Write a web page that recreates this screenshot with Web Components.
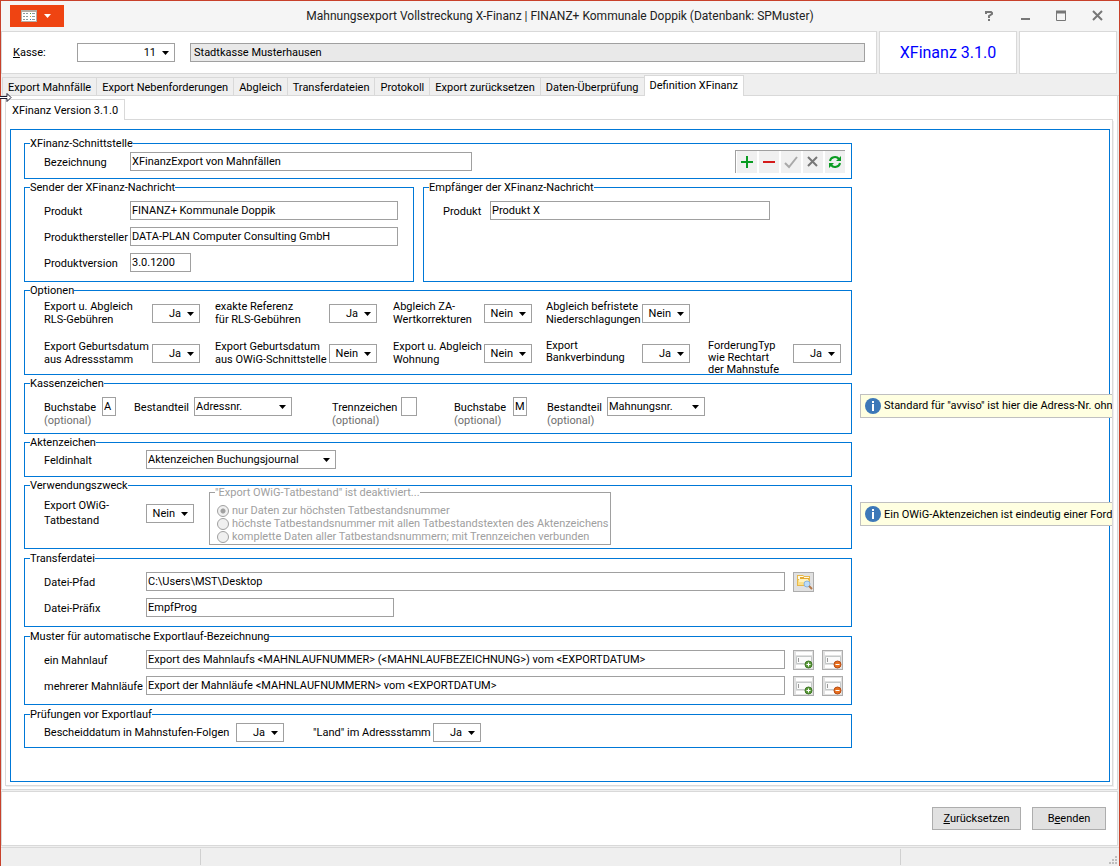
<!DOCTYPE html>
<html lang="de">

<head>
    <meta charset="utf-8">
    <meta name="viewport" content="width=device-width, initial-scale=1">
    <title>Mahnungsexport Vollstreckung X-Finanz</title>
    <style>
        :root {
            --line: #d9d9d9;
            --field-line: #a0a0a0;
            --face: #efefef;
            --accent: #0078d7;
            --frame: #c8412b;
        }

        body {
            margin: 0;
            background: var(--face);
            color: #000;
            font: 11px/13px Roboto, "Liberation Sans", sans-serif;
        }
    </style>
</head>

<body>
    <xf-window></xf-window>

    <template id="window-template">
        <style>
            :host {
                display: flex;
                flex-direction: column;
                box-sizing: border-box;
                min-height: 100vh;
                border: 1px solid var(--frame);
                border-bottom: 0;
                overflow: hidden;
            }

            header {
                display: grid;
                grid-template-columns: 1fr 138px 98px;
                gap: 2px;
                padding-right: 2px;
            }

            header > div,
            footer {
                box-sizing: border-box;
                border: 1px solid var(--line);
                background: #fff;
            }

            .kasse {
                display: flex;
                gap: 15px;
                padding: 11px;
                height: 43px;
            }

            .kasse .name {
                flex: 1;
                --fill: #e9e9e9;
            }

            .version {
                display: flex;
                align-items: center;
                justify-content: center;
                color: #00f;
                font-size: 16px;
            }

            .page {
                flex: 1;
                display: flex;
                flex-direction: column;
                box-sizing: border-box;
                margin-right: 1px;
                padding: 3px 3px 3px 3px;
                border: 1px solid var(--line);
                border-top: 0;
                background: #fff;
            }

            .sheet {
                flex: 1;
                display: flex;
                flex-direction: column;
                margin-right: 1px;
                padding: 9px 2px 3px 4px;
                border: 1px solid var(--line);
                border-top: 0;
                box-shadow: 1px 1px 0 #efefef;
                overflow: hidden;
            }

            footer {
                display: flex;
                justify-content: flex-end;
                align-items: center;
                gap: 11px;
                height: 55px;
                margin: 1px 1px 1px 0;
                padding-right: 11px;
            }
        </style>
        <title-bar>Mahnungsexport Vollstreckung X-Finanz | FINANZ+ Kommunale Doppik (Datenbank: SPMuster)</title-bar>
        <header>
            <div class="kasse">
                <choice-field options="11" value="11" style="--label: 64px; --width: 98px"><u>K</u>asse:</choice-field>
                <text-field class="name" name="Kassenname" value="Stadtkasse Musterhausen" readonly></text-field>
            </div>
            <div class="version">XFinanz 3.1.0</div>
            <div></div>
        </header>
        <tab-strip selected="7"
            tabs="Export Mahnfälle|Export Nebenforderungen|Abgleich|Transferdateien|Protokoll|Export zurücksetzen|Daten-Überprüfung|Definition XFinanz"></tab-strip>
        <div class="page">
            <tab-strip class="inner" selected="0" tabs="XFinanz Version 3.1.0"></tab-strip>
            <div class="sheet">
                <definition-form></definition-form>
            </div>
        </div>
        <footer>
            <push-button style="--width: 89px"><u>Z</u>urücksetzen</push-button>
            <push-button style="--width: 74px">B<u>e</u>enden</push-button>
        </footer>
        <status-bar></status-bar>
        <resize-pointer></resize-pointer>
    </template>

    <template id="form-template">
        <style>
            :host {
                flex: 1;
                display: grid;
                grid-template-columns: minmax(0, 828px) minmax(0, 1fr);
                align-content: start;
                gap: 2px 8px;
                padding: 7px 0 0 13px;
                border: 1px solid var(--accent);
            }

            group-box,
            .pair {
                grid-column: 1;
            }

            hint-label {
                grid-column: 2;
                align-self: center;
                margin-right: -3px;
            }

            .row {
                display: flex;
            }

            .name {
                justify-content: space-between;
                height: 28px;
                padding: 0 6px 0 19px;
            }

            .name text-field {
                margin-top: 2px;
            }

            .pair {
                display: grid;
                grid-template-columns: 390px 1fr;
                gap: 9px;
            }

            .pair group-box {
                grid-column: auto;
            }

            .fields {
                display: flex;
                flex-direction: column;
                gap: 7px;
                padding: 7px 8px 9px 19px;
            }

            .fields .row {
                gap: 8px;
            }

            .fields .row text-field {
                flex: 1;
            }

            .fields .files {
                padding-right: 29px;
            }

            .options {
                display: grid;
                grid-template-columns: 171px 178px 153px 162px 133px;
                grid-auto-rows: 26px;
                row-gap: 14px;
                align-content: start;
                padding: 3px 0 0 19px;
                height: 74px;
            }

            .three {
                line-height: 12px;
                height: 26px;
                align-items: flex-start;
                --align: flex-start;
                --drop: 4px;
            }

            .key {
                display: grid;
                grid-template-columns: 90px 198px 122px 93px 158px;
                height: 36px;
                padding: 7px 0 0 19px;
            }

            .key small {
                display: block;
                font-size: 11px;
                color: #6e6e6e;
            }

            .record {
                height: 26px;
                padding: 1px 0 0 19px;
            }

            .purpose {
                height: 56px;
                padding-left: 19px;
            }

            .purpose choice-field {
                line-height: 15px;
                height: 30px;
                margin-top: 6px;
            }

            .purpose group-box {
                --accent: #a0a0a0;
                color: #a0a0a0;
                margin: -6px 0 3px 15px;
                width: 402px;
            }

            .later {
                margin-top: 1px;
            }

            .checks {
                gap: 29px;
                height: 19px;
                padding: 2px 0 5px 19px;
            }
        </style>
        <group-box heading="XFinanz-Schnittstelle">
            <div class="row name">
                <text-field value="XFinanzExport von Mahnfällen" style="--label: 86px; --width: 342px">Bezeichnung</text-field>
                <record-toolbar></record-toolbar>
            </div>
        </group-box>
        <div class="pair">
            <group-box heading="Sender der XFinanz-Nachricht">
                <div class="fields" style="--label: 86px; --width: 268px">
                    <text-field value="FINANZ+ Kommunale Doppik">Produkt</text-field>
                    <text-field value="DATA-PLAN Computer Consulting GmbH">Produkthersteller</text-field>
                    <text-field value="3.0.1200" style="--width: 61px">Produktversion</text-field>
                </div>
            </group-box>
            <group-box heading="Empfänger der XFinanz-Nachricht">
                <div class="fields" style="--label: 47px; --width: 280px">
                    <text-field value="Produkt X">Produkt</text-field>
                </div>
            </group-box>
        </div>
        <group-box heading="Optionen">
            <div class="options">
                <choice-field value="Ja" style="--label: 108px">Export u. Abgleich<br>RLS-Gebühren</choice-field>
                <choice-field value="Ja" style="--label: 114px">exakte Referenz<br>für RLS-Gebühren</choice-field>
                <choice-field value="Nein" style="--label: 91px">Abgleich ZA-<br>Wertkorrekturen</choice-field>
                <choice-field value="Nein" style="--label: 96px; grid-column: span 2">Abgleich befristete<br>Niederschlagungen</choice-field>
                <choice-field value="Ja" style="--label: 108px">Export Geburtsdatum<br>aus Adressstamm</choice-field>
                <choice-field value="Nein" style="--label: 114px">Export Geburtsdatum<br>aus OWiG-Schnittstelle</choice-field>
                <choice-field value="Nein" style="--label: 91px">Export u. Abgleich<br>Wohnung</choice-field>
                <choice-field class="three" value="Ja" style="--label: 96px">Export<br>Bankverbindung</choice-field>
                <choice-field class="three" value="Ja" style="--label: 85px">ForderungTyp<br>wie Rechtart<br>der Mahnstufe</choice-field>
            </div>
        </group-box>
        <group-box heading="Kassenzeichen">
            <div class="key">
                <text-field value="A" style="--label: 58px; --width: 14px">Buchstabe<small>(optional)</small></text-field>
                <choice-field align="left" options="Adressnr.|Mahnungsnr." value="Adressnr." style="--label: 60px; --width: 98px">Bestandteil</choice-field>
                <text-field value="" style="--label: 69px; --width: 16px">Trennzeichen<small>(optional)</small></text-field>
                <text-field value="M" style="--label: 59px; --width: 14px">Buchstabe<small>(optional)</small></text-field>
                <choice-field align="left" options="Adressnr.|Mahnungsnr." value="Mahnungsnr." style="--label: 60px; --width: 98px">Bestandteil<small>(optional)</small></choice-field>
            </div>
        </group-box>
        <hint-label>Standard für "avviso" ist hier die Adress-Nr. ohne</hint-label>
        <group-box heading="Aktenzeichen">
            <div class="row record">
                <choice-field align="left" options="Aktenzeichen Buchungsjournal" value="Aktenzeichen Buchungsjournal" style="--label: 102px; --width: 190px">Feldinhalt</choice-field>
            </div>
        </group-box>
        <group-box heading="Verwendungszweck">
            <div class="row purpose">
                <choice-field value="Nein" style="--label: 102px">Export OWiG-<br>Tatbestand</choice-field>
                <group-box heading='"Export OWiG-Tatbestand" ist deaktiviert...'>
                    <radio-list selected="0"
                        items="nur Daten zur höchsten Tatbestandsnummer|höchste Tatbestandsnummer mit allen Tatbestandstexten des Aktenzeichens|komplette Daten aller Tatbestandsnummern; mit Trennzeichen verbunden"></radio-list>
                </group-box>
            </div>
        </group-box>
        <hint-label>Ein OWiG-Aktenzeichen ist eindeutig einer Forderung</hint-label>
        <group-box class="later" heading="Transferdatei">
            <div class="fields" style="--label: 102px">
                <div class="row files">
                    <text-field value="C:\Users\MST\Desktop">Datei-Pfad</text-field>
                    <icon-button icon="folder" label="Ordner wählen"></icon-button>
                </div>
                <text-field value="EmpfProg" style="--width: 248px">Datei-Präfix</text-field>
            </div>
        </group-box>
        <group-box class="later" heading="Muster für automatische Exportlauf-Bezeichnung">
            <div class="fields" style="--label: 102px">
                <div class="row">
                    <text-field value="Export des Mahnlaufs &lt;MAHNLAUFNUMMER&gt; (&lt;MAHNLAUFBEZEICHNUNG&gt;) vom &lt;EXPORTDATUM&gt;">ein Mahnlauf</text-field>
                    <icon-button icon="add" label="Platzhalter einfügen"></icon-button>
                    <icon-button icon="remove" label="Platzhalter entfernen"></icon-button>
                </div>
                <div class="row">
                    <text-field value="Export der Mahnläufe &lt;MAHNLAUFNUMMERN&gt; vom &lt;EXPORTDATUM&gt;">mehrerer Mahnläufe</text-field>
                    <icon-button icon="add" label="Platzhalter einfügen"></icon-button>
                    <icon-button icon="remove" label="Platzhalter entfernen"></icon-button>
                </div>
            </div>
        </group-box>
        <group-box class="later" heading="Prüfungen vor Exportlauf">
            <div class="row checks">
                <choice-field value="Ja" style="--label: 192px">Bescheiddatum in Mahnstufen-Folgen</choice-field>
                <choice-field value="Ja" style="--label: 120px">"Land" im Adressstamm</choice-field>
            </div>
        </group-box>
    </template>

    <script>
        class TitleBar extends HTMLElement {
            constructor() {
                super();
                this.attachShadow({ mode: 'open' });
                this.shadowRoot.innerHTML = `
                <style>
                    :host {
                        display: grid;
                        grid-template-columns: 180px 1fr 180px;
                        align-items: center;
                        height: 30px;
                        background: #f5f5f5;
                        font-size: 12px;
                        line-height: 16px;
                        color: #222;
                    }
                    button {
                        padding: 0;
                        border: 0;
                        background: none;
                    }
                    svg { display: block; }
                    .menu {
                        width: 54px;
                        height: 22px;
                        margin-left: 9px;
                        background: #ef4412;
                    }
                    .title {
                        text-align: center;
                        white-space: nowrap;
                    }
                    .controls {
                        display: flex;
                        justify-content: flex-end;
                        padding-right: 4px;
                    }
                    .controls button { width: 36px; }
                    .controls svg { margin: 0 auto; }
                </style>
                <button class="menu" aria-label="Menü">
                    <svg width="54" height="22">
                        <path d="M11 5h16v12h-16z" fill="#b5aca3"/>
                        <path d="M12 7h14v9h-14z" fill="#fff"/>
                        <path d="M13 8.500h2m1 0h2M13 11.500h2m1 0h2M13 14.500h2m1 0h2M22 8.500h3M22 11.500h3M22 14.500h3" stroke="#8d9ba0"/>
                        <path d="M20 8.500h1" stroke="#4a9a3c"/><path d="M20 11.500h1" stroke="#e0a020"/><path d="M20 14.500h1" stroke="#3b78c0"/>
                        <path d="M34 9h7l-3.500 4z" fill="#fff"/>
                    </svg>
                </button>
                <div class="title"><slot></slot></div>
                <div class="controls">
                    <button aria-label="Hilfe"><svg width="12" height="12" fill="none" stroke="#777" stroke-width="2"><path d="M3 4V2h5l1 1v1L6 6v2M6 9v2"/></svg></button>
                    <button aria-label="Minimieren"><svg width="12" height="12" fill="none" stroke="#777" stroke-width="2"><path d="M2 9h9"/></svg></button>
                    <button aria-label="Maximieren"><svg width="12" height="12" fill="none" stroke="#777"><path d="M1.500 1.500h9v9h-9z"/><path d="M1 2h10" stroke-width="3"/></svg></button>
                    <button aria-label="Schließen"><svg width="12" height="12" fill="none" stroke="#777" stroke-width="2"><path d="M2 1l9 9M11 1l-9 9"/></svg></button>
                </div>`;
            }
        }

        class TabStrip extends HTMLElement {
            connectedCallback() {
                const selected = Number(this.getAttribute('selected'));
                const tabs = this.getAttribute('tabs').split('|');
                this.attachShadow({ mode: 'open' });
                this.shadowRoot.innerHTML = `
                <style>
                    :host {
                        display: flex;
                        align-items: flex-end;
                        height: 22px;
                        padding-left: 1px;
                        box-shadow: inset 0 -1px var(--line);
                    }
                    :host(.inner) {
                        height: 21px;
                        padding-left: 0;
                        margin-right: 1px;
                    }
                    button {
                        height: 19px;
                        padding: 1px 5px 0;
                        border: 1px solid var(--line);
                        border-right: 0;
                        background: none;
                        font: inherit;
                        color: inherit;
                        white-space: nowrap;
                    }
                    button[aria-selected=true] {
                        height: 21px;
                        padding: 0 5px 2px;
                        border: 1px solid var(--line);
                        border-bottom: 0;
                        background: #fff;
                    }
                    :host(.inner) button { padding: 0 6px; }
                </style>
                ${tabs.map((tab, i) => `<button role="tab" aria-selected="${i === selected}">${tab}</button>`).join('')}`;
            }
        }

        class GroupBox extends HTMLElement {
            connectedCallback() {
                this.attachShadow({ mode: 'open' });
                this.shadowRoot.innerHTML = `
                <style>
                    :host { display: block; }
                    fieldset {
                        box-sizing: border-box;
                        min-width: 0;
                        height: 100%;
                        margin: 0;
                        padding: 0;
                        border: 1px solid var(--accent);
                    }
                    legend {
                        margin-left: 5px;
                        padding: 0;
                    }
                </style>
                <fieldset>
                    <legend></legend>
                    <slot></slot>
                </fieldset>`;
                this.shadowRoot.querySelector('legend').textContent = this.getAttribute('heading');
            }
        }

        class TextField extends HTMLElement {
            connectedCallback() {
                this.attachShadow({ mode: 'open' });
                this.shadowRoot.innerHTML = `
                <style>
                    :host { display: flex; }
                    label {
                        flex: none;
                        width: var(--label);
                        padding-top: 4px;
                        white-space: nowrap;
                    }
                    input {
                        box-sizing: border-box;
                        flex: 0 1 var(--width, 100%);
                        min-width: 0;
                        width: var(--width, 100%);
                        height: 19px;
                        padding: 0 1px;
                        border: 1px solid var(--field-line);
                        border-radius: 0;
                        background: var(--fill, #fff);
                        font: inherit;
                        color: inherit;
                    }
                    :host([name]) input { padding-left: 3px; }
                    :host([name]) label { display: none; }
                </style>
                <label for="control"><slot></slot></label>
                <input id="control" type="text">`;
                const input = this.shadowRoot.querySelector('input');
                input.value = this.getAttribute('value');
                input.readOnly = this.hasAttribute('readonly');
                if (this.hasAttribute('name')) input.setAttribute('aria-label', this.getAttribute('name'));
            }
        }

        class ChoiceField extends HTMLElement {
            connectedCallback() {
                const options = (this.getAttribute('options') || 'Ja|Nein').split('|');
                const value = this.getAttribute('value');
                const left = this.getAttribute('align') === 'left';
                this.attachShadow({ mode: 'open' });
                this.shadowRoot.innerHTML = `
                <style>
                    :host {
                        display: flex;
                        align-items: ${left ? 'flex-start' : 'center'};
                    }
                    label {
                        flex: none;
                        width: var(--label);
                        padding-top: ${left ? '4px' : '0'};
                        white-space: nowrap;
                    }
                    .box {
                        position: relative;
                        width: var(--width, 48px);
                        height: 19px;
                        margin-top: var(--drop, 0);
                    }
                    select {
                        appearance: none;
                        display: block;
                        box-sizing: border-box;
                        width: 100%;
                        height: 19px;
                        padding: 0 18px 0 1px;
                        border: 1px solid var(--field-line);
                        border-radius: 0;
                        background: #fff;
                        font: inherit;
                        line-height: 13px;
                        color: inherit;
                        text-align: ${left ? 'left' : 'right'};
                        text-align-last: ${left ? 'left' : 'right'};
                    }
                    svg {
                        position: absolute;
                        right: 6px;
                        top: 8px;
                        pointer-events: none;
                    }
                </style>
                <label for="control"><slot></slot></label>
                <span class="box">
                    <select id="control">${options.map(o => `<option${o === value ? ' selected' : ''}>${o}</option>`).join('')}</select>
                    <svg width="7" height="4"><path d="M0 0h7L3.500 4z"/></svg>
                </span>`;
            }
        }

        class RadioList extends HTMLElement {
            connectedCallback() {
                const items = this.getAttribute('items').split('|');
                const selected = Number(this.getAttribute('selected'));
                this.attachShadow({ mode: 'open' });
                this.shadowRoot.innerHTML = `
                <style>
                    :host {
                        display: block;
                        padding: 5px 0 1px 7px;
                    }
                    div {
                        display: flex;
                        align-items: center;
                        gap: 3px;
                        height: 13px;
                        white-space: nowrap;
                    }
                    input {
                        appearance: none;
                        box-sizing: border-box;
                        flex: none;
                        width: 12px;
                        height: 12px;
                        margin: 0;
                        border: 1px solid #a0a0a0;
                        border-radius: 50%;
                        background: #f0f0f0;
                    }
                    input:checked {
                        background: radial-gradient(circle, #a0a0a0 2px, #f0f0f0 3px);
                    }
                </style>
                ${items.map((item, i) => `<div><input type="radio" name="r" id="r${i}" disabled${i === selected ? ' checked' : ''}><label for="r${i}">${item}</label></div>`).join('')}`;
            }
        }

        class RecordToolbar extends HTMLElement {
            constructor() {
                super();
                this.attachShadow({ mode: 'open' });
                this.shadowRoot.innerHTML = `
                <style>
                    :host {
                        display: flex;
                        gap: 2px;
                        height: 22px;
                        padding: 0 0 0 1px;
                        border: 1px solid #a0a0a0;
                        border-width: 1px 0 0 1px;
                    }
                    button {
                        width: 20px;
                        padding: 0;
                        border: 0;
                        background: #f0f0f0;
                    }
                    svg {
                        display: block;
                        margin: 0 auto;
                        fill: none;
                    }
                </style>
                <button aria-label="Hinzufügen"><svg width="14" height="14" stroke="#0a9c22" stroke-width="2"><path d="M7 1v12M1 7h12"/></svg></button>
                <button aria-label="Löschen"><svg width="14" height="14" stroke="#d41a1a" stroke-width="2"><path d="M1 7h12"/></svg></button>
                <button aria-label="Speichern"><svg width="14" height="14" stroke="#a9a9a9" stroke-width="2"><path d="M1 8l4 4l8-10"/></svg></button>
                <button aria-label="Abbrechen"><svg width="14" height="14" stroke="#777" stroke-width="2"><path d="M2 2l9 9M11 2l-9 9"/></svg></button>
                <button aria-label="Aktualisieren"><svg width="14" height="14" stroke="#0a9c22" stroke-width="2">
                    <path d="M2 6a5 4.500 0 0 1 9-2M12 8a5 4.500 0 0 1-9 2"/>
                    <path d="M13 1v5H8zM1 13V8h5z" fill="#0a9c22" stroke="none"/></svg></button>`;
            }
        }

        const icons = {
            folder: `<path d="M3 2h6l1 1h6v10h-13z" fill="#e8b84a"/><path d="M4 3h5l1 1h5v2h-11z" fill="#fffbe8"/>
                <path d="M6 4h4v1h5v1h-9z" fill="#e3a935"/><path d="M4 7h11v5h-11z" fill="#fbe08a"/><path d="M5 6h9v3h-9z" fill="#fff3c0"/>
                <circle cx="13" cy="11" r="3" fill="#bcdcf8" stroke="#8ab4dc"/><path d="M15 13l3 3" stroke="#b5794b" stroke-width="2"/>`,
            field: `<path d="M2 1h16v3h-16zM2 6h16v6h-16zM2 14h16v3h-16z" fill="#fff"/>
                <path d="M2.500 5.500h15v7h-15z" fill="#fafafa" stroke="#c4c8c8"/><path d="M4.500 7v4" stroke="#999"/>`,
            add: `<circle cx="14.500" cy="13.500" r="3.500" fill="#5c9c3a" stroke="#3c7424"/><path d="M12.500 13.500h4M14.500 11.500v4" stroke="#fff"/>`,
            remove: `<circle cx="14.500" cy="13.500" r="3.500" fill="#e8701e" stroke="#b44a14"/><path d="M12.500 13.500h4" stroke="#fff"/>`
        };

        class IconButton extends HTMLElement {
            connectedCallback() {
                const icon = this.getAttribute('icon');
                this.attachShadow({ mode: 'open' });
                this.shadowRoot.innerHTML = `
                <style>
                    :host {
                        display: block;
                        height: 19px;
                    }
                    button {
                        display: block;
                        box-sizing: border-box;
                        width: 21px;
                        height: 20px;
                        padding: 0;
                        border: 1px solid #adadad;
                        background: #e1e1e1;
                    }
                    svg { display: block; }
                </style>
                <button aria-label="${this.getAttribute('label')}">
                    <svg width="19" height="18" fill="none">${icon === 'folder' ? '' : icons.field}${icons[icon]}</svg>
                </button>`;
            }
        }

        class HintLabel extends HTMLElement {
            constructor() {
                super();
                this.attachShadow({ mode: 'open' });
                this.shadowRoot.innerHTML = `
                <style>
                    :host {
                        display: flex;
                        align-items: center;
                        gap: 3px;
                        box-sizing: border-box;
                        height: 24px;
                        padding-left: 4px;
                        border: 1px solid #c0c0c0;
                        border-right: 0;
                        background: #ffffe1;
                        white-space: nowrap;
                        overflow: hidden;
                        z-index: 1;
                    }
                    svg { flex: none; }
                </style>
                <svg width="16" height="16"><circle cx="8" cy="8" r="8" fill="#3d78b8"/><path d="M7 3h2v2H7zM7 6h2v7H7z" fill="#fff"/></svg>
                <span><slot></slot></span>`;
            }
        }

        class PushButton extends HTMLElement {
            constructor() {
                super();
                this.attachShadow({ mode: 'open' });
                this.shadowRoot.innerHTML = `
                <style>
                    :host { display: block; }
                    button {
                        box-sizing: border-box;
                        display: block;
                        width: var(--width);
                        height: 23px;
                        padding: 0;
                        border: 1px solid #adadad;
                        background: #e1e1e1;
                        font: inherit;
                        color: inherit;
                    }
                </style>
                <button><slot></slot></button>`;
            }
        }

        class StatusBar extends HTMLElement {
            constructor() {
                super();
                this.attachShadow({ mode: 'open' });
                this.shadowRoot.innerHTML = `
                <style>
                    :host {
                        display: grid;
                        grid-template-columns: 199px 1fr 219px;
                        height: 16px;
                        padding: 1px 0;
                        border-top: 1px solid var(--line);
                    }
                    div + div { border-left: 1px solid #d0d0d0; }
                    .grip {
                        display: flex;
                        justify-content: flex-end;
                        align-items: flex-end;
                    }
                </style>
                <div></div>
                <div></div>
                <div class="grip">
                    <svg width="10" height="9" fill="#bfbfbf"><path d="M6 0h2v2H6zM3 3h2v2H3zM6 3h2v2H6zM0 6h2v2H0zM3 6h2v2H3zM6 6h2v2H6z"/></svg>
                </div>`;
            }
        }

        // horizontal resize arrow resting on the left window edge
        class ResizePointer extends HTMLElement {
            constructor() {
                super();
                this.attachShadow({ mode: 'open' });
                this.shadowRoot.innerHTML = `
                <style>
                    :host {
                        position: absolute;
                        left: 0;
                        top: 92px;
                        pointer-events: none;
                    }
                    svg { display: block; }
                </style>
                <svg width="13" height="11"><path d="M0 4.500h7v-3l4 4l-4 4v-3H0" fill="#fff" stroke="#1c1c30"/></svg>`;
            }
        }

        class DefinitionForm extends HTMLElement {
            constructor() {
                super();
                this.attachShadow({ mode: 'open' });
                this.shadowRoot.appendChild(document.getElementById('form-template').content.cloneNode(true));
            }
        }

        class XfWindow extends HTMLElement {
            constructor() {
                super();
                this.attachShadow({ mode: 'open' });
                this.shadowRoot.appendChild(document.getElementById('window-template').content.cloneNode(true));
            }
        }

        customElements.define('title-bar', TitleBar);
        customElements.define('tab-strip', TabStrip);
        customElements.define('group-box', GroupBox);
        customElements.define('text-field', TextField);
        customElements.define('choice-field', ChoiceField);
        customElements.define('radio-list', RadioList);
        customElements.define('record-toolbar', RecordToolbar);
        customElements.define('icon-button', IconButton);
        customElements.define('hint-label', HintLabel);
        customElements.define('push-button', PushButton);
        customElements.define('status-bar', StatusBar);
        customElements.define('resize-pointer', ResizePointer);
        customElements.define('definition-form', DefinitionForm);
        customElements.define('xf-window', XfWindow);
    </script>
</body>

</html>
